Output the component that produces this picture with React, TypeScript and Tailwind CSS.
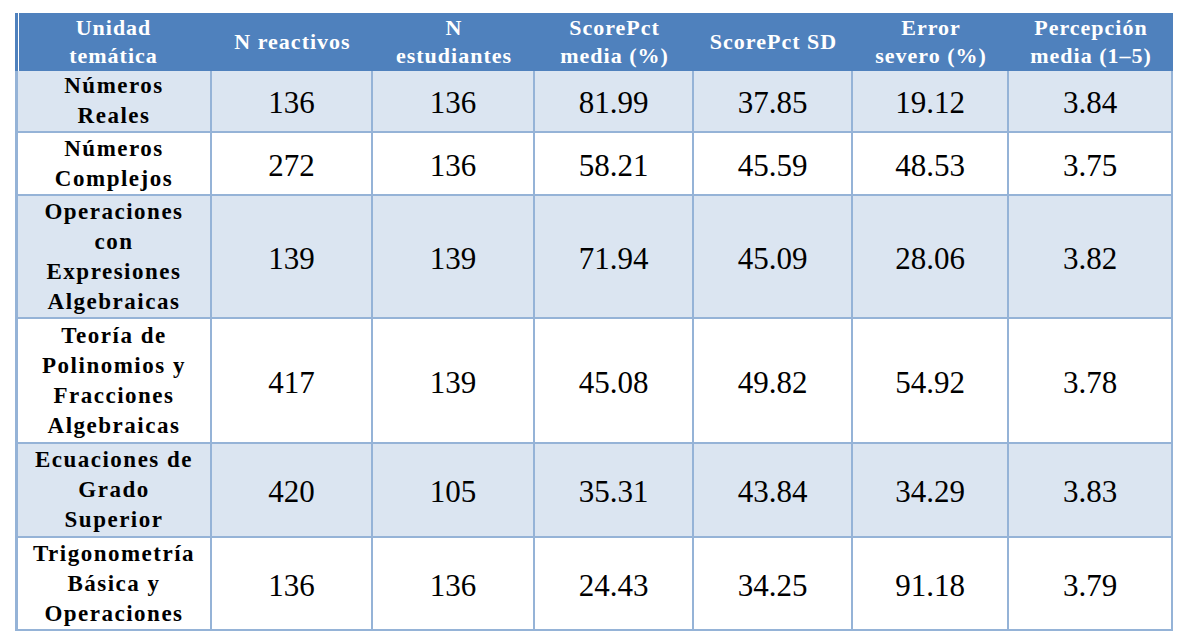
const headers: string[][] = [
  ["Unidad", "temática"],
  ["N reactivos"],
  ["N", "estudiantes"],
  ["ScorePct", "media (%)"],
  ["ScorePct SD"],
  ["Error", "severo (%)"],
  ["Percepción", "media (1–5)"],
];

const rows = [
  {
    name: ["Números", "Reales"],
    values: ["136", "136", "81.99", "37.85", "19.12", "3.84"],
    height: "h-[61px]",
    shaded: true,
  },
  {
    name: ["Números", "Complejos"],
    values: ["272", "136", "58.21", "45.59", "48.53", "3.75"],
    height: "h-[63px]",
    shaded: false,
  },
  {
    name: ["Operaciones", "con", "Expresiones", "Algebraicas"],
    values: ["139", "139", "71.94", "45.09", "28.06", "3.82"],
    height: "h-[123px]",
    shaded: true,
  },
  {
    name: ["Teoría de", "Polinomios y", "Fracciones", "Algebraicas"],
    values: ["417", "139", "45.08", "49.82", "54.92", "3.78"],
    height: "h-[125px]",
    shaded: false,
  },
  {
    name: ["Ecuaciones de", "Grado", "Superior"],
    values: ["420", "105", "35.31", "43.84", "34.29", "3.83"],
    height: "h-[94px]",
    shaded: true,
  },
  {
    name: ["Trigonometría", "Básica y", "Operaciones"],
    values: ["136", "136", "24.43", "34.25", "91.18", "3.79"],
    height: "h-[93px]",
    shaded: false,
  },
];

const colWidths = ["w-[197px]", "w-[161px]", "w-[162px]", "w-[159px]", "w-[159px]", "w-[156px]", "w-[164px]"];

export default function App() {
  return (
    <div className="min-h-[637px] w-[1178px] bg-white pt-[13px] pl-[15px] [font-family:'Liberation_Serif',serif] text-black">
      <table className="w-[1158px] table-fixed border-separate border-spacing-0">
        <colgroup>
          {colWidths.map((w, i) => (
            <col key={i} className={w} />
          ))}
        </colgroup>
        <thead>
          <tr>
            {headers.map((lines, i) => (
              <th
                key={i}
                className={`h-[58px] bg-[#4f81bd] p-0 text-center align-middle text-[22px] font-bold leading-[28px] tracking-[1px] text-white ${
                  i === 0 ? "shadow-[inset_3px_0_0_#4f81bd,inset_4px_0_0_#ffffff]" : ""
                }`}
              >
                {lines.map((l, j) => (
                  <div key={j}>{l}</div>
                ))}
              </th>
            ))}
          </tr>
        </thead>
        <tbody>
          {rows.map((row, r) => (
            <tr key={r} className={row.shaded ? "bg-[#dbe5f1]" : "bg-white"}>
              <td
                className={`${row.height} border-b-2 border-l-[3px] border-r-2 border-[#95b3d7] p-0 text-center align-middle text-[23px] font-bold leading-[30px] tracking-[1.5px]`}
              >
                {row.name.map((l, j) => (
                  <div key={j}>{l}</div>
                ))}
              </td>
              {row.values.map((v, c) => (
                <td
                  key={c}
                  className={`${row.height} border-b-2 border-r-2 border-[#95b3d7] px-0 pb-0 pt-[4px] text-center align-middle text-[31px] leading-[30px]`}
                >
                  {v}
                </td>
              ))}
            </tr>
          ))}
        </tbody>
      </table>
    </div>
  );
}
